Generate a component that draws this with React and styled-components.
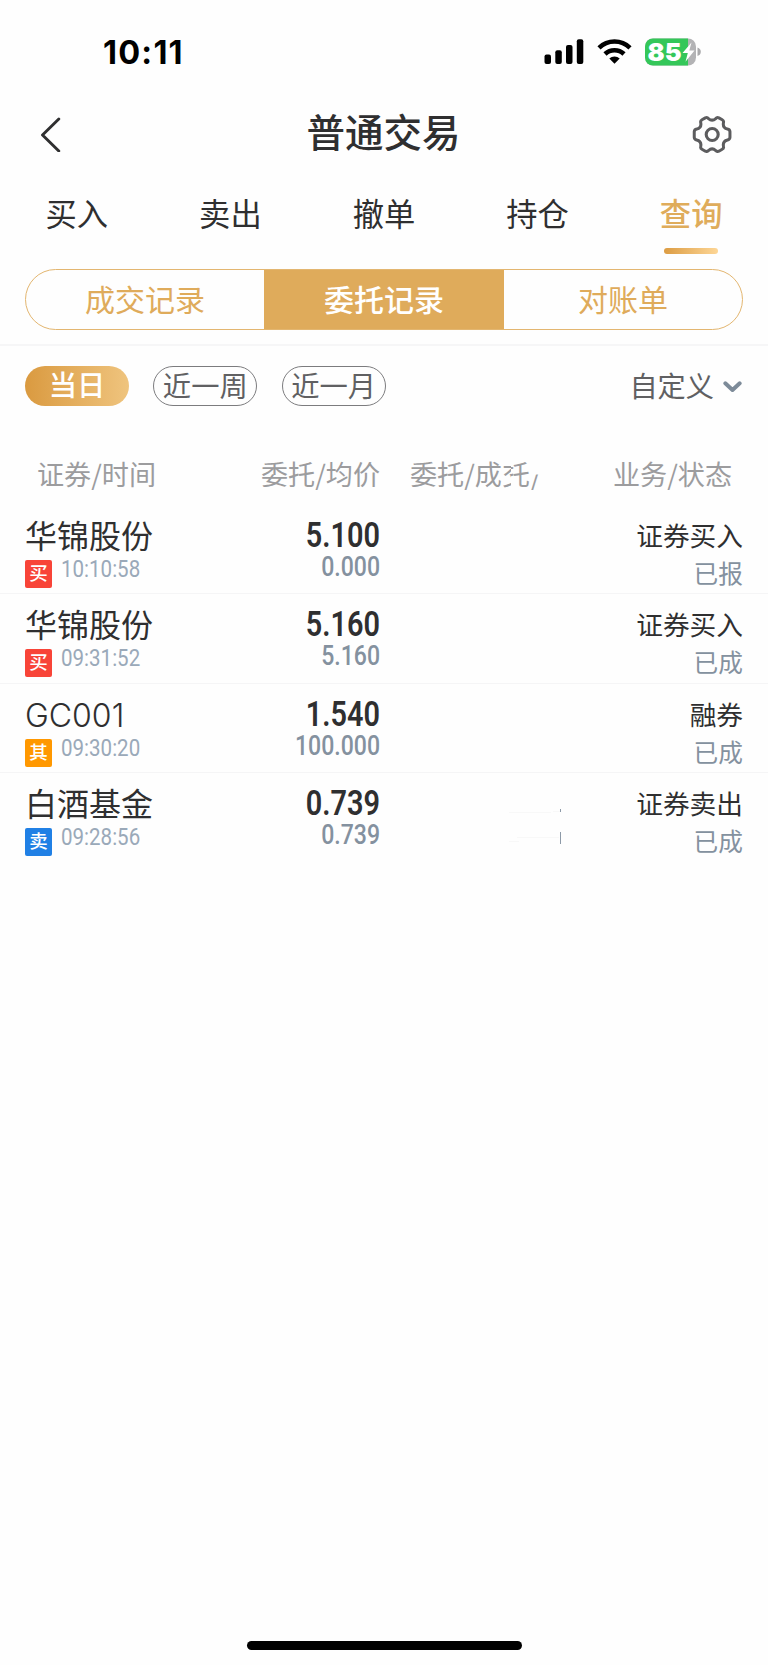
import React from "react";
import styled, { createGlobalStyle } from "styled-components";

const Global = createGlobalStyle`
  * { box-sizing: border-box; }
  body { margin: 0; background: #fefefe; }
`;
const Screen = styled.div`
  width: 768px; height: 1665px; display: flex; flex-direction: column;
  background: #fefefe; color: #2f2f30;
  font-family: "Noto Sans CJK SC", sans-serif; font-weight: 400; line-height: 1; white-space: nowrap;
`;
const StatusBar = styled.header`
  height: 104px; flex: none; padding: 0 67px 0 103px;
  display: flex; justify-content: space-between; align-items: center; color: #000;
`;
const Clock = styled.time`
  font: 750 32.5px/32px Inter, sans-serif; letter-spacing: 1.2px; padding-top: 2px;
`;
const StatusIcons = styled.div` display: flex; align-items: center; gap: 13px; `;
const NavBar = styled.nav`
  height: 60px; flex: none; padding: 0 36px 0 40px;
  display: grid; grid-template-columns: 35px 1fr 40px; align-items: center;
`;
const Title = styled.h1`
  margin: 0; padding: 0 0 7px; font-size: 38.5px; font-weight: 500; line-height: 53px; text-align: center;
`;
const Tabs = styled.div` display: flex; height: 105px; flex: none; padding-top: 27px; `;
const Tab = styled.div`
  flex: 1; display: flex; flex-direction: column; align-items: center;
  font-size: 31.3px; line-height: 44px;
  font-weight: ${p => (p.$active ? 500 : 400)};
  color: ${p => (p.$active ? "#dfac5b" : "#2f2f30")};
`;
const Underline = styled.i`
  width: 54px; height: 6px; margin-top: 13px; border-radius: 3px;
  background: linear-gradient(90deg, #dc9c43, #fdd696);
`;
const Segments = styled.div`
  height: 61px; flex: none; margin: 0 25px; display: flex; overflow: hidden;
  border: 1px solid #e3b670; border-radius: 31px;
`;
const Segment = styled.div`
  flex: ${p => (p.$active ? "0 0 240px" : "1")};
  display: flex; align-items: center; justify-content: center; font-size: 30px; padding-bottom: 4px;
  font-weight: ${p => (p.$active ? 500 : 400)};
  color: ${p => (p.$active ? "#fff" : "#dfab5b")};
  background: ${p => (p.$active ? "#dfab5b" : "transparent")};
`;
const Filters = styled.div`
  flex: none; height: 84px; margin-top: 14px; padding: 20px 26px 0 25px;
  border-top: 2px solid #f6f6f7; display: flex; align-items: flex-start; gap: 24.3px;
`;
const Pill = styled.div`
  width: 104px; height: 39.5px; border-radius: 20px; display: flex; align-items: center; justify-content: center;
  font-size: 28.3px; padding-bottom: ${p => (p.$active ? 3 : 2)}px;
  font-weight: ${p => (p.$active ? 500 : 400)};
  color: ${p => (p.$active ? "#fff" : "#606062")};
  border: ${p => (p.$active ? "0" : "1px solid #7c7c7e")};
  background: ${p => (p.$active ? "linear-gradient(90deg, #da9a40, #efc47e)" : "transparent")};
`;
const Custom = styled.div`
  margin-left: auto; height: 38px; display: flex; align-items: center; gap: 9px; font-size: 28.2px; color: #606062;
  svg { position: relative; top: 1.5px; }
`;
const Row = styled.div`
  display: grid; grid-template-columns: 190px 165px 1fr 182px; padding: 0 25px;
`;
const HeadRow = styled(Row)`
  height: 77px; flex: none; align-items: center; font-size: 27.1px; color: #9c9c9e; padding-top: 15px;
`;
const Head = styled.div`
  text-align: ${p => p.$align || "left"};
  padding: ${p => p.$pad || "0"};
`;
const HeadQty = styled(Head)` display: flex; `;
const Clip = styled.span`
  width: ${p => p.$w}px; overflow: hidden; display: flex;
  justify-content: ${p => (p.$from === "right" ? "flex-end" : "flex-start")};
`;
const Slash = styled.span` clip-path: inset(52% 0 -30% 0); margin-left: 1px; `;
const Order = styled(Row)`
  height: 89.4px; flex: none; border-bottom: 1px solid ${p => (p.$last ? "transparent" : "#f5f5f6")};
`;
const NameCell = styled.div`
  padding-top: 12px; font-family: Inter, "Noto Sans CJK SC", sans-serif;
  font-size: 32px; line-height: 40px; font-weight: ${p => (p.$latin ? 300 : 400)};
`;
const Meta = styled.div` display: flex; gap: 9px; margin-top: 3px; `;
const Badge = styled.span`
  width: 27px; height: 28px; border-radius: 2px; background: ${p => p.$color}; color: #fff;
  font-size: 18.5px; font-weight: 500; line-height: 27px; text-align: center;
`;
const Digits = styled.div`
  font-family: Roboto, sans-serif; transform: scaleX(0.845);
  transform-origin: ${p => p.$origin || "right"} center;
`;
const Time = styled(Digits)` font-size: 24.3px; line-height: 17px; font-weight: 450; color: #9aa9b9; `;
const PriceCell = styled.div` text-align: right; padding-top: 12px; `;
const Price = styled(Digits)` font-size: 34.2px; line-height: 36px; font-weight: 600; color: #2f2f30; `;
const Average = styled(Digits)` font-size: 27.3px; line-height: 29px; font-weight: 500; color: #84919f; `;
const QtyCell = styled.div` display: flex; justify-content: flex-end; margin-right: -2px; `;
const StateCell = styled.div` text-align: right; padding-top: 10px; font-size: 26.7px; line-height: 40px; `;
const State = styled.div` font-size: 24.7px; line-height: 35px; color: #84919f; `;
const Home = styled.div`
  width: 275px; height: 9px; border-radius: 5px; background: #000; margin: auto auto 15px 246.5px;
`;

const Signal = () => (
  <svg width="40" height="26" viewBox="0 0 40 26">
    <rect x="0.5" y="15.5" width="6.5" height="9.5" rx="2" /><rect x="11.3" y="11.3" width="6.5" height="13.7" rx="2" />
    <rect x="22" y="6" width="6.5" height="19" rx="2" /><rect x="32.8" y="0.3" width="6.5" height="24.7" rx="2" />
  </svg>
);
const Wifi = () => (
  <svg width="35" height="26" viewBox="0 0 35 26" fill="none" stroke="#000" strokeWidth="4.6">
    <path d="M2 8.800a22.400 22.400 0 0 1 31 0M8 15a13.800 13.800 0 0 1 19 0" />
    <path d="M17.500 24.800l-5.200-5.300a7.500 7.500 0 0 1 10.400 0z" fill="#000" stroke="none" />
  </svg>
);
const Battery = () => (
  <svg width="56" height="28" viewBox="0 0 56 28">
    <defs><clipPath id="cell"><rect width="51" height="27" rx="8" y=".5" /></clipPath></defs>
    <g clipPath="url(#cell)"><rect width="51" height="28" fill="#b3b3b5" /><rect width="43" height="28" fill="#34c759" /></g>
    <path d="M52.500 9.500q3.300 1.200 3.300 4.300t-3.300 4.300z" fill="#a9a9ab" />
    <text x="2.500" y="22.800" fill="#fff" fontFamily="Inter, sans-serif" fontWeight="900" fontSize="25" textLength="34" lengthAdjust="spacingAndGlyphs">85</text>
    <path d="M46.500 4.500L37.500 15h5.300l-2.300 8.800 9-11.300h-5.200z" fill="#fff" />
  </svg>
);
const Back = () => (
  <svg width="21" height="36" viewBox="0 0 21 36" fill="none" stroke="#2f2f30" strokeWidth="2.900" strokeLinecap="round" strokeLinejoin="round">
    <path d="M18.800 3L2.500 19 18.800 35" />
  </svg>
);
const Gear = () => (
  <svg width="40" height="38" viewBox="0 0 40 38" fill="none" stroke="#5c5c5e" strokeWidth="3.100" strokeLinejoin="round">
    <circle cx="20.200" cy="19.500" r="6" />
    <g transform="translate(.8 1.200) scale(.965)">
      <path d="M13 1.700q2-.8 3.200.7 3.800 3.400 7.600 0Q25 .9 27 1.700l3.500 2q1.800 1 1.300 3-1.100 5.300 4.200 6.600 2.300.5 2.500 2.700v6q-.2 2.200-2.500 2.700-5.300 1.300-4.200 6.600.5 2-1.300 3l-3.500 2q-2 .8-3.200-.7-3.800-3.400-7.600 0-1.200 1.500-3.200.7l-3.500-2q-1.800-1-1.300-3 1.100-5.300-4.200-6.600-2.300-.5-2.500-2.700v-6q.2-2.200 2.500-2.700 5.300-1.300 4.200-6.600-.5-2 1.300-3z" />
    </g>
  </svg>
);
const Chevron = () => (
  <svg width="19" height="12" viewBox="0 0 19 12" fill="none" stroke="#7d8b99" strokeWidth="3.900" strokeLinecap="round" strokeLinejoin="round">
    <path d="M2.300 2.300l7.200 6.700 7.200-6.700" />
  </svg>
);
const Residue = () => (
  <svg width="54" height="88" viewBox="0 0 54 88">
    <path d="M0 39.500h42M8 64.500h42M0 68.500h10M44 38.500h7" stroke="#f8f8f8" fill="none" />
    <path d="M51.500 36v3M51.500 59v12" stroke="#8d9aa8" fill="none" />
  </svg>
);

const orders = [
  { name: "华锦股份", side: "买", color: "#f84438", time: "10:10:58", price: "5.100", avg: "0.000", kind: "证券买入", state: "已报" },
  { name: "华锦股份", side: "买", color: "#f84438", time: "09:31:52", price: "5.160", avg: "5.160", kind: "证券买入", state: "已成" },
  { name: "GC001", latin: true, side: "其", color: "#ff9800", time: "09:30:20", price: "1.540", avg: "100.000", kind: "融券", state: "已成" },
  { name: "白酒基金", side: "卖", color: "#2080e5", time: "09:28:56", price: "0.739", avg: "0.739", kind: "证券卖出", state: "已成" },
];

export default function App() {
  return (
    <Screen>
      <Global />
      <StatusBar>
        <Clock>10:11</Clock>
        <StatusIcons><Signal /><Wifi /><Battery /></StatusIcons>
      </StatusBar>
      <NavBar><Back /><Title>普通交易</Title><Gear /></NavBar>
      <Tabs>
        {["买入", "卖出", "撤单", "持仓", "查询"].map((t, i) => (
          <Tab key={t} $active={i === 4}>{t}{i === 4 && <Underline />}</Tab>
        ))}
      </Tabs>
      <Segments>
        <Segment>成交记录</Segment><Segment $active>委托记录</Segment><Segment>对账单</Segment>
      </Segments>
      <Filters>
        <Pill $active>当日</Pill><Pill>近一周</Pill><Pill>近一月</Pill>
        <Custom>自定义<Chevron /></Custom>
      </Filters>
      <HeadRow>
        <Head $pad="0 0 0 12px">证券/时间</Head>
        <Head $align="right">委托/均价</Head>
        <HeadQty $pad="0 0 0 30px">委托/成<Clip $w={9}>交</Clip><Clip $w={19} $from="right">托</Clip><Slash>/</Slash></HeadQty>
        <Head $align="right" $pad="0 11px 0 0">业务/状态</Head>
      </HeadRow>
      {orders.map((o, i) => (
        <Order key={o.time} $last={i === 3}>
          <NameCell $latin={o.latin}>{o.name}
            <Meta><Badge $color={o.color}>{o.side}</Badge><Time $origin="left">{o.time}</Time></Meta>
          </NameCell>
          <PriceCell><Price>{o.price}</Price><Average>{o.avg}</Average></PriceCell>
          <QtyCell>{i === 3 && <Residue />}</QtyCell>
          <StateCell>{o.kind}<State>{o.state}</State></StateCell>
        </Order>
      ))}
      <Home />
    </Screen>
  );
}
